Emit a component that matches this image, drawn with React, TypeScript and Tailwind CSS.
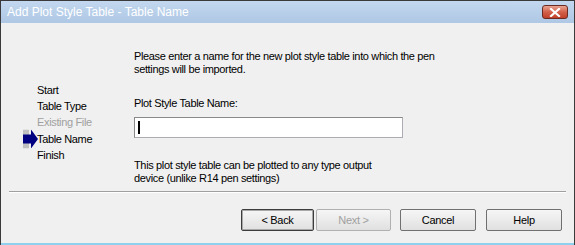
import React from 'react';

const steps = [
    { label: 'Start', disabled: false, current: false },
    { label: 'Table Type', disabled: false, current: false },
    { label: 'Existing File', disabled: true, current: false },
    { label: 'Table Name', disabled: false, current: true },
    { label: 'Finish', disabled: false, current: false },
];

function StepArrow() {
    return (
        <svg width="15" height="19" viewBox="0 0 15 19" className="block">
            <rect x="0" y="0" width="6" height="19" fill="#c0c0c0" />
            <path d="M0 5 H8 V0 L15 9.5 L8 19 V14 H0 Z" fill="#000080" />
        </svg>
    );
}

function CloseButton() {
    return (
        <div className="w-[26px] h-[14px] rounded-[3px] border border-[#6b2a22] bg-gradient-to-b from-[#e8a493] via-[#d2604a] to-[#c0402a] flex items-center justify-center">
            <svg width="12" height="9" viewBox="0 0 12 9">
                <path d="M2 1 L10 8 M10 1 L2 8" stroke="#fff" strokeWidth="2.2" strokeLinecap="square" />
            </svg>
        </div>
    );
}

function WizardButton({ label, width, disabled, isDefault }: { label: string; width: string; disabled?: boolean; isDefault?: boolean }) {
    return (
        <button
            className={`${width} h-[22px] rounded-[2px] border bg-gradient-to-b from-[#f6f6f6] to-[#e0e0e0] text-[11px] tracking-[-0.3px] ${
                isDefault ? 'border-[#3c3c3c] shadow-[inset_0_0_0_1px_#a8a8a8]' : disabled ? 'border-[#b0b0b0]' : 'border-[#707070]'
            } ${disabled ? 'text-[#a0a0a0]' : 'text-black'}`}
        >
            {label}
        </button>
    );
}

export default function App() {
    return (
        <div
            className="w-[575px] h-[245px] flex flex-col bg-[#f0f0f0] border-x border-t border-[#3a3a3a] overflow-hidden"
            style={{ fontFamily: '"Liberation Sans", Arial, sans-serif' }}
        >
            {/* title bar */}
            <div className="h-[22px] shrink-0 flex items-center justify-between pl-[6px] pr-[6px] bg-gradient-to-b from-[#c3d8ef] to-[#aec7e4]">
                <span className="text-[12px] text-white">Add Plot Style Table - Table Name</span>
                <CloseButton />
            </div>

            <div className="flex-1 flex flex-col text-[11px] tracking-[-0.35px] text-black">
                <div className="flex h-[168px]">
                    {/* steps */}
                    <div className="w-[133px] shrink-0 pt-[59px] flex flex-col">
                        {steps.map((s) => (
                            <div key={s.label} className="h-[16.25px] flex items-center relative">
                                {s.current && (
                                    <div className="absolute left-[22px] top-1/2 -translate-y-1/2">
                                        <StepArrow />
                                    </div>
                                )}
                                <span className={`ml-[36px] ${s.disabled ? 'text-[#a0a0a0]' : ''}`}>{s.label}</span>
                            </div>
                        ))}
                    </div>

                    {/* content */}
                    <div className="flex-1 pt-[27px] leading-[13px]">
                        <p>
                            Please enter a name for the new plot style table into which the pen
                            <br />
                            settings will be imported.
                        </p>
                        <p className="mt-[21px]">Plot Style Table Name:</p>
                        <div className="mt-[7px] w-[269px] h-[21px] bg-white border border-[#abadb3] border-t-[#8a8a8a] border-l-[#8a8a8a] flex items-center pl-[3px]">
                            <div className="w-[2px] h-[13px] bg-black" />
                        </div>
                        <p className="mt-[21px]">
                            This plot style table can be plotted to any type output
                            <br />
                            device (unlike R14 pen settings)
                        </p>
                    </div>
                </div>

                <div className="mx-[8px] border-t border-[#a0a0a0] border-b border-b-white" />

                <div className="flex justify-end pt-[16px] pr-[12px]">
                    <div className="flex gap-[2px]">
                        <WizardButton label="< Back" width="w-[73px]" isDefault />
                        <WizardButton label="Next >" width="w-[75px]" disabled />
                    </div>
                    <div className="ml-[9px]">
                        <WizardButton label="Cancel" width="w-[76px]" />
                    </div>
                    <div className="ml-[10px]">
                        <WizardButton label="Help" width="w-[76px]" />
                    </div>
                </div>

                <div className="mt-auto h-[2px] bg-[#8fd0ee]" />
            </div>
        </div>
    );
}
